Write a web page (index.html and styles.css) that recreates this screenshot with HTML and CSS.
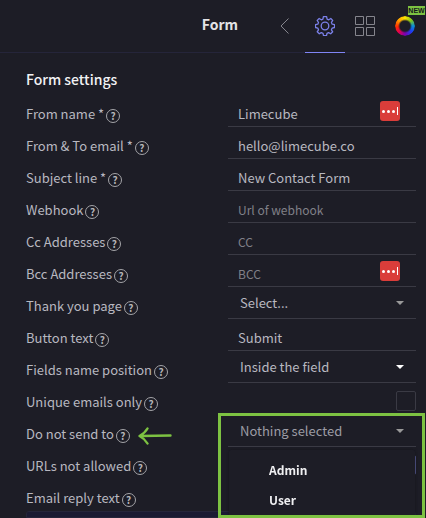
FILE: index.html
```
<!DOCTYPE html>
<html lang="en">
<head>
    <meta charset="UTF-8">
    <meta name="viewport" content="width=device-width, initial-scale=1.0">
    <title>Form settings</title>
    <link rel="stylesheet" href="styles.css">
</head>
<body>
    <div class="panel">
        <header class="panel-header">
            <h1>Form</h1>
            <nav class="tabs">
                <button type="button" class="tab" aria-label="Back">
                    <svg width="10" height="16" viewBox="0 0 10 16"><path d="M8.500 .5 1 8l7.500 7.500" fill="none" stroke="#85858d"/></svg>
                </button>
                <button type="button" class="tab active" aria-label="Settings">
                    <svg width="20" height="20" viewBox="0 0 20 20" fill="none" stroke="#7b80e8" stroke-width="1.300" stroke-linejoin="round">
                        <path d="M8.400 .7h3.200l.5 2.400 1.700.7 2-1.300 1.900 1.900-1.300 2.100.8 1.700 2.300.4v2.900l-2.300.6-.8 1.700 1.300 2-2 2-2.100-1.200-1.600.7-.5 2.300H8.500L8 17.300l-1.700-.7-2 1.200-2.100-2 1.300-2-.7-1.700-2.300-.6V8.600l2.300-.4.7-1.700-1.300-2.100 2-1.900 2.100 1.300 1.600-.7z"/>
                        <circle cx="10" cy="10" r="3.800"/>
                    </svg>
                </button>
                <button type="button" class="tab" aria-label="Layout">
                    <svg width="20" height="20" viewBox="0 0 20 20" fill="none" stroke="#85858d">
                        <path d="M.5.5h8v8h-8zM11.500.5h8v8h-8zM.5 11.500h8v8h-8zM11.500 11.500h8v8h-8z"/>
                    </svg>
                </button>
                <button type="button" class="tab" aria-label="Colours">
                    <span class="color-ring"></span>
                    <span class="badge">NEW</span>
                </button>
            </nav>
        </header>

        <form class="settings">
            <h2>Form settings</h2>

            <div class="row">
                <label for="fromName">From name * <span class="help">?</span></label>
                <div class="control">
                    <input type="text" id="fromName" value="Limecube">
                    <button type="button" class="autofill" aria-label="Fill in"><i></i><i></i><i></i><b></b></button>
                </div>
            </div>
            <div class="row">
                <label for="email">From &amp; To email * <span class="help">?</span></label>
                <div class="control"><input type="text" id="email" value="hello@limecube.co"></div>
            </div>
            <div class="row">
                <label for="subject">Subject line * <span class="help">?</span></label>
                <div class="control"><input type="text" id="subject" value="New Contact Form"></div>
            </div>
            <div class="row">
                <label for="webhook">Webhook <span class="help">?</span></label>
                <div class="control"><input type="text" id="webhook" placeholder="Url of webhook"></div>
            </div>
            <div class="row">
                <label for="cc">Cc Addresses <span class="help">?</span></label>
                <div class="control"><input type="text" id="cc" placeholder="CC"></div>
            </div>
            <div class="row">
                <label for="bcc">Bcc Addresses <span class="help">?</span></label>
                <div class="control">
                    <input type="text" id="bcc" placeholder="BCC">
                    <button type="button" class="autofill" aria-label="Fill in"><i></i><i></i><i></i><b></b></button>
                </div>
            </div>
            <div class="row">
                <label for="thankYou">Thank you page <span class="help">?</span></label>
                <div class="control drop">
                    <select id="thankYou"><option>Select...</option></select>
                </div>
            </div>
            <div class="row">
                <label for="buttonText">Button text <span class="help">?</span></label>
                <div class="control"><input type="text" id="buttonText" value="Submit"></div>
            </div>
            <div class="row">
                <label for="position">Fields name position <span class="help">?</span></label>
                <div class="control drop bright">
                    <select id="position"><option>Inside the field</option></select>
                </div>
            </div>
            <div class="row">
                <label for="unique">Unique emails only <span class="help">?</span></label>
                <div class="control plain"><input type="checkbox" id="unique"></div>
            </div>
            <div class="row">
                <label for="doNotSend">Do not send to <span class="help">?</span>
                    <svg class="arrow" width="34" height="18" viewBox="0 0 34 18" fill="none" stroke="#7dc242" stroke-width="2.400" stroke-linecap="round" stroke-linejoin="round">
                        <path d="M32.500 8.500 2 9M9.500 1.500Q7 6 1.500 9q5 2.500 8 7.500"/>
                    </svg>
                </label>
                <div class="control drop">
                    <button type="button" id="doNotSend" class="select-button" aria-haspopup="listbox" aria-expanded="true">Nothing selected</button>
                    <ul class="menu" role="listbox">
                        <li role="option">Admin</li>
                        <li role="option">User</li>
                    </ul>
                    <div class="highlight"></div>
                </div>
            </div>
            <div class="row">
                <label for="urls">URLs not allowed <span class="help">?</span></label>
                <div class="control plain"><input type="checkbox" id="urls" class="on" checked></div>
            </div>
            <div class="row">
                <label for="reply">Email reply text <span class="help">?</span></label>
            </div>
            <textarea id="reply"></textarea>
        </form>
    </div>
</body>
</html>
```
FILE: styles.css
```
* {
    box-sizing: border-box;
}

body {
    margin: 0;
    background-color: #1d1d26;
    color: #b8b8c0;
    font-family: "Noto Sans CJK SC", "Noto Sans", sans-serif;
    font-size: 13px;
}

button, input, select, textarea {
    margin: 0;
    padding: 0;
    border: 0;
    background: none;
    color: inherit;
    font: inherit;
}

.panel {
    display: flex;
    flex-direction: column;
    height: 100vh;
    overflow: hidden;
}

.panel-header {
    display: flex;
    flex: none;
    align-items: center;
    justify-content: flex-end;
    gap: 27px;
    height: 53px;
    padding-right: 1px;
    border-bottom: 1px solid #25253a;
}

h1 {
    margin: 0 0 4px;
    color: #e4e4e6;
    font-size: 14px;
    font-weight: 700;
}

.tabs {
    display: flex;
    height: 53px;
}

.tab {
    display: flex;
    position: relative;
    align-items: center;
    justify-content: center;
    width: 40px;
    border-bottom: 1px solid transparent;
}

.tab.active {
    border-bottom-color: #8085f5;
}

.color-ring {
    width: 20px;
    height: 20px;
    border-radius: 50%;
    background: conic-gradient(#ffe600, #7bc51d 50deg, #0a8fd8 90deg, #1d3cf0 130deg, #7a00b0 180deg, #e00050 225deg, #ff2a00 265deg, #ff9a00 310deg, #ffe600);
    -webkit-mask: radial-gradient(circle, transparent 5px, #000 7px);
    mask: radial-gradient(circle, transparent 5px, #000 7px);
}

.badge {
    position: absolute;
    top: 6px;
    right: 0;
    width: 17px;
    height: 9px;
    background-color: #7dc242;
    color: #16161c;
    font: bold 7px/9px "Liberation Sans", Arial, sans-serif;
    text-align: center;
}

.settings {
    display: flex;
    flex: 1;
    flex-direction: column;
    min-height: 0;
    padding: 14px 10px 0 26px;
}

h2 {
    flex: none;
    margin: 0 0 4px;
    color: #f2f2f4;
    font-size: 14px;
    font-weight: 500;
    line-height: 24px;
}

.row {
    display: grid;
    flex: none;
    grid-template-columns: 1fr 188px;
    height: 32px;
}

label {
    display: flex;
    align-items: center;
    gap: 2px;
    padding-top: 6px;
    line-height: 24px;
    white-space: nowrap;
}

.help {
    width: 14px;
    height: 14px;
    margin-top: 4px;
    border: 1px solid #a4a4a8;
    border-radius: 50%;
    color: #b4b4b8;
    font-size: 10px;
    font-weight: 700;
    line-height: 12px;
    text-align: center;
}

.arrow {
    margin: 3px 0 0 6px;
}

.control {
    display: flex;
    position: relative;
    border-bottom: 1px solid #3a3a44;
}

.control.plain {
    align-items: center;
    justify-content: flex-end;
    border-bottom: 0;
}

input[type="text"] {
    width: 100%;
    padding: 6px 10px 0;
}

input::placeholder {
    color: #808088;
    font-size: 12px;
    opacity: 1;
}

input[type="checkbox"] {
    width: 20px;
    height: 20px;
    margin-top: 4px;
    border: 1px solid #3a3a44;
    border-radius: 2px;
    appearance: none;
}

input[type="checkbox"].on {
    border-color: #6065a8;
}

.autofill {
    display: flex;
    position: absolute;
    top: 6px;
    right: 16px;
    align-items: center;
    justify-content: center;
    gap: 2px;
    width: 20px;
    height: 20px;
    border-radius: 3px;
    background-color: #da3d3a;
}

.autofill i {
    width: 3px;
    height: 3px;
    border-radius: 50%;
    background-color: #fff;
}

.autofill b {
    width: 1px;
    height: 8px;
    background-color: #fff;
}

select, .select-button {
    width: 100%;
    padding-left: 12px;
    appearance: none;
    text-align: left;
}

.select-button {
    color: #9c9ca5;
}

.drop::after {
    content: "";
    position: absolute;
    top: 14px;
    right: 12px;
    border: 4px solid transparent;
    border-top-color: #999;
    border-bottom: 0;
    pointer-events: none;
}

.drop.bright::after {
    border-top-color: #fff;
}

.menu {
    position: absolute;
    z-index: 1;
    top: 35px;
    left: 1px;
    right: 1px;
    margin: 0;
    padding: 5px 0;
    border-radius: 2px;
    background-color: #1d1d26;
    box-shadow: 0 0 3px #15151c;
    color: #f0f0f2;
    font-size: 12px;
    font-weight: 700;
    list-style: none;
}

.menu li {
    padding-left: 40px;
    line-height: 30px;
}

/* frame around the open drop-down */
.highlight {
    position: absolute;
    z-index: 2;
    top: -2px;
    left: -10px;
    right: -9px;
    height: 105px;
    border: 3px solid #7dc242;
    pointer-events: none;
}

textarea {
    flex: 1;
    min-height: 0;
    border: 1px solid #25253a;
    border-radius: 3px 3px 0 0;
    background-color: #1a1a32;
    resize: none;
}
```
